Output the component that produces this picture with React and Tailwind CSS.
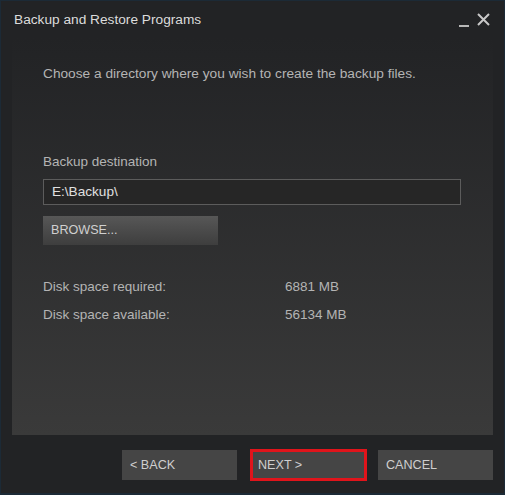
import React from 'react'

export default function App() {
    return (
        <div className="w-[505px] h-[495px] bg-[#1c2a36] p-[1px] pb-[2px] font-['Liberation_Sans',Arial,sans-serif]">
            <div className="w-full h-full bg-[#222325] flex flex-col">
                <div className="h-[36px] flex items-start justify-between pl-[13px] pr-[14px] pt-[10px]">
                    <span className="text-[13.7px] leading-[17px] text-[#dcdcdc]">Backup and Restore Programs</span>
                    <div className="flex items-start gap-[8px] text-[#c8c8c8]">
                        <span className="w-[10px] h-[2px] bg-[#b8b8b8] mt-[14px]"></span>
                        <svg width="13" height="13" viewBox="0 0 13 13" className="mt-[2px]">
                            <path d="M1 1 L12 12 M12 1 L1 12" stroke="#c8c8c8" strokeWidth="2" />
                        </svg>
                    </div>
                </div>

                <div className="mx-[11px] h-[398px] bg-gradient-to-b from-[#222325] to-[#3a3a3a] pl-[31px] pr-[32px] pt-[28px]">
                    <p className="text-[13.7px] leading-[17px] text-[#b4b4b4]">Choose a directory where you wish to create the backup files.</p>

                    <p className="mt-[71px] text-[13.5px] leading-[17px] text-[#b4b4b4]">Backup destination</p>
                    <div className="mt-[9px] h-[26px] border border-[#5c5c5c] bg-[#262626] flex items-center pl-[8px] text-[13.6px] text-[#e0e0e0]">E:\Backup\</div>
                    <button className="mt-[11px] w-[175px] h-[29px] bg-gradient-to-b from-[#575757] to-[#3e3e3e] text-left pl-[8px] text-[12.6px] text-[#d0d0d0]">BROWSE...</button>

                    <div className="mt-[33px] flex flex-col gap-[11px] text-[13.5px] leading-[17px] text-[#b4b4b4]">
                        <div className="flex"><span className="w-[242px]">Disk space required:</span><span>6881 MB</span></div>
                        <div className="flex"><span className="w-[242px]">Disk space available:</span><span>56134 MB</span></div>
                    </div>
                </div>

                <div className="flex justify-end pr-[11px] pt-[15px]">
                    <button className="w-[115px] h-[30px] bg-[#454545] text-left pl-[8px] text-[12.6px] text-[#cfcfcf]">&lt; BACK</button>
                    <button className="ml-[13px] w-[117px] h-[32px] bg-[#454545] border-[3px] border-[#e0141b] text-left pl-[5px] text-[12.6px] text-[#cfcfcf] -mt-[1px]">NEXT &gt;</button>
                    <button className="ml-[11px] w-[115px] h-[30px] bg-[#454545] text-left pl-[8px] text-[12.6px] text-[#cfcfcf]">CANCEL</button>
                </div>
            </div>
        </div>
    )
}
